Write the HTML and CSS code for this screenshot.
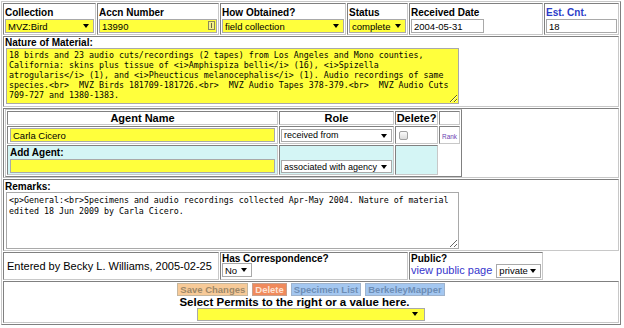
FILE: index.html
```html
<!DOCTYPE html>
<html>
<head>
    <title>Edit Accession</title>
    <link rel="stylesheet" href="styles.css">
</head>
<body>
<form id="editAccn" onsubmit="return false;">
<table class="accn">
    <tr>
        <td class="cell c1">
            <label class="lbl top" for="collection_id">Collection</label>
            <span class="dd"><select id="collection_id" class="req"><option>MVZ:Bird</option></select></span>
        </td>
        <td class="cell c2">
            <label class="lbl top" for="accn_number">Accn Number</label>
            <span class="fld"><input type="text" id="accn_number" class="txt req" value="13990"><span class="keyicon"></span></span>
        </td>
        <td class="cell c3">
            <label class="lbl top" for="accn_type">How Obtained?</label>
            <span class="dd"><select id="accn_type" class="req"><option>field collection</option></select></span>
        </td>
        <td class="cell c4">
            <label class="lbl top" for="accn_status">Status</label>
            <span class="dd"><select id="accn_status" class="req"><option>complete</option></select></span>
        </td>
        <td class="cell c5">
            <label class="lbl top" for="rec_date">Received Date</label>
            <input type="text" id="rec_date" class="txt date" value="2004-05-31">
        </td>
        <td class="cell c6">
            <label class="lbl top est" for="estimated_count">Est. Cnt.</label>
            <input type="text" id="estimated_count" class="txt" value="18">
        </td>
    </tr>
    <tr>
        <td class="cell" colspan="6">
            <label class="lbl nature" for="nature_of_material">Nature of Material:</label>
            <textarea id="nature_of_material" class="area nat req">18 birds and 23 audio cuts/recordings (2 tapes) from Los Angeles and Mono counties, California: skins plus tissue of &lt;i&gt;Amphispiza belli&lt;/i&gt; (16), &lt;i&gt;Spizella atrogularis&lt;/i&gt; (1), and &lt;i&gt;Pheucticus melanocephalis&lt;/i&gt; (1). Audio recordings of same species.&lt;br&gt;  MVZ Birds 181709-181726.&lt;br&gt;  MVZ Audio Tapes 378-379.&lt;br&gt;  MVZ Audio Cuts 709-727 and 1380-1383.</textarea>
        </td>
    </tr>
    <tr>
        <td class="cell agentcell" colspan="6">
            <table class="agents">
                <tr>
                    <th class="a1">Agent Name</th>
                    <th class="a2">Role</th>
                    <th class="a3">Delete?</th>
                    <th class="a4"></th>
                </tr>
                <tr class="agentrow">
                    <td class="acell"><input type="text" class="txt req" value="Carla Cicero"></td>
                    <td class="acell"><span class="dd"><select class="small"><option>received from</option></select></span></td>
                    <td class="acell"><input type="checkbox" class="chk"></td>
                    <td class="acell rank"><span class="ranklink">Rank</span></td>
                </tr>
                <tr class="newrow">
                    <td class="acell"><label class="lbl add">Add Agent:</label><input type="text" class="txt req"></td>
                    <td class="acell bottom"><span class="dd"><select class="small"><option>associated with agency</option></select></span></td>
                    <td class="acell"></td>
                </tr>
            </table>
        </td>
    </tr>
    <tr>
        <td class="cell" colspan="6">
            <label class="lbl remarks" for="remarks">Remarks:</label>
            <textarea id="remarks" class="area rem">&lt;p&gt;General:&lt;br&gt;Specimens and audio recordings collected Apr-May 2004. Nature of material edited 18 Jun 2009 by Carla Cicero.</textarea>
        </td>
    </tr>
    <tr>
        <td class="cell entered" colspan="2">Entered by Becky L. Williams, 2005-02-25</td>
        <td class="cell" colspan="2">
            <label class="lbl low" for="correspondence">Has Correspondence?</label>
            <span class="dd inline no"><select id="correspondence"><option>No</option></select></span>
        </td>
        <td class="cell">
            <label class="lbl low" for="is_public">Public?</label>
            <div class="pubrow">
                <a class="publink">view public page</a>
                <span class="dd inline priv"><select id="is_public"><option>private</option></select></span>
            </div>
        </td>
    </tr>
    <tr>
        <td class="cell actions" colspan="6">
            <div class="btnrow">
                <button type="submit" class="btn savBtn">Save Changes</button>
                <button type="button" class="btn delBtn">Delete</button>
                <button type="button" class="btn lnkBtn">Specimen List</button>
                <button type="button" class="btn lnkBtn">BerkeleyMapper</button>
            </div>
            <div class="permitlbl">Select Permits to the right or a value here.</div>
            <span class="dd inline permit"><select class="req"><option></option></select></span>
        </td>
    </tr>
</table>
</form>
</body>
</html>
```

FILE: styles.css
```css
body {
    margin: 1px 0 0 1px;
    font-family: "Liberation Sans", Arial, sans-serif;
    font-size: 11px;
    color: #000;
    background: #fff;
}

.accn {
    width: 620px;
    table-layout: fixed;
    border-spacing: 1px;
    border: 1px solid;
    border-color: #c8c8c8 #808080 #808080 #c8c8c8;
}

.cell {
    box-sizing: border-box;
    border: 1px solid;
    border-color: #808080 #c8c8c8 #c8c8c8 #808080;
    padding: 1px;
    vertical-align: top;
}

.c1 { width: 93px; }
.c2 { width: 122px; }
.c3 { width: 126px; }
.c4 { width: 61px; }
.c5 { width: 134px; }
.c6 { width: 75px; }

.lbl {
    display: block;
    font-weight: bold;
    font-size: 10px;
    line-height: 11px;
}

.lbl.top {
    padding-top: 2px;
    margin-bottom: 1px;
}

.lbl.nature { line-height: 10px; }
.lbl.remarks { line-height: 11px; }
.lbl.low { line-height: 9px; }
.lbl.add { line-height: 12px; }

.est {
    color: #2c3cc8;
}

.txt {
    display: block;
    width: 100%;
    box-sizing: border-box;
    height: 14px;
    margin: 0;
    border: 1px solid #a9a9a9;
    padding: 0 2px;
    font: 9.5px "Liberation Sans", Arial, sans-serif;
    background: #fff;
    color: #000;
}

.txt.date {
    width: 73px;
}

.req, .dd select.req {
    background: #ffff3c;
}

.fld {
    position: relative;
    display: block;
}

.keyicon {
    position: absolute;
    right: 2px;
    top: 2px;
    width: 5px;
    height: 7px;
    border: 1px solid #8c8a5a;
    background: #f3f08a;
}

.keyicon::after {
    content: "";
    position: absolute;
    left: 2px;
    top: 1px;
    width: 1px;
    height: 5px;
    background: #6a6840;
}

.dd {
    position: relative;
    display: block;
}

.dd.inline {
    display: inline-block;
}

.dd::after {
    content: "";
    position: absolute;
    right: 5px;
    top: 5px;
    border-left: 3px solid transparent;
    border-right: 3px solid transparent;
    border-top: 4px solid #000;
    pointer-events: none;
}

.dd select {
    appearance: none;
    -webkit-appearance: none;
    display: block;
    width: 100%;
    box-sizing: border-box;
    height: 14px;
    margin: 0;
    border: 1px solid #a9a9a9;
    border-radius: 0;
    padding: 0 2px;
    font: 9.5px "Liberation Sans", Arial, sans-serif;
    background-color: #fff;
    color: #000;
}

.dd select.small {
    height: 13px;
    font-size: 9px;
}

.dd.inline select {
    display: inline-block;
}

.area {
    display: block;
    box-sizing: border-box;
    width: 453px;
    margin: 0 0 0 1px;
    border: 1px solid #a9a9a9;
    padding: 1px 2px;
    font-family: "DejaVu Sans Mono", monospace;
    font-size: 8.3px;
    line-height: 10px;
    color: #000;
    overflow: hidden;
}

.nat {
    height: 56px;
    margin-bottom: 1px;
}

.rem {
    height: 57px;
    padding-top: 2px;
    line-height: 11px;
    background: #fff;
}

.agentcell {
    padding: 0 1px;
}

.agents {
    width: 457px;
    table-layout: fixed;
    border-spacing: 1px;
    border: 1px solid;
    border-color: #c8c8c8 #808080 #808080 #c8c8c8;
}

.agents th, .acell {
    box-sizing: border-box;
    border: 1px solid;
    border-color: #808080 #c8c8c8 #c8c8c8 #808080;
}

.agents th {
    height: 14px;
    padding: 0;
    font-size: 11px;
    line-height: 12px;
    font-weight: bold;
    text-align: center;
}

.a1 { width: 271px; }
.a2 { width: 115px; }
.a3 { width: 43px; }
.a4 { width: 21px; }

.acell {
    padding: 1px 2px;
    vertical-align: middle;
}

.agentrow .acell:nth-child(2) {
    padding: 1px;
}

.newrow .acell {
    background: #d4f5f5;
    vertical-align: top;
}

.newrow .acell.bottom {
    vertical-align: bottom;
    padding: 1px;
}

.chk {
    appearance: none;
    -webkit-appearance: none;
    display: block;
    width: 9px;
    height: 9px;
    margin: 0 0 0 1px;
    border: 1px solid #a0a0a0;
    border-radius: 2px;
    background: linear-gradient(#fafafa, #dcdcdc);
}

.rank {
    padding: 0;
    text-align: center;
}

.ranklink {
    font-size: 6.4px;
    color: #6a3fb0;
}

.entered {
    vertical-align: middle;
    padding-left: 3px;
    font-size: 11px;
}

.no select { width: 30px; }
.priv select { width: 45px; }

.pubrow {
    display: flex;
    align-items: center;
    gap: 4px;
    height: 15px;
    white-space: nowrap;
}

.publink {
    flex-shrink: 0;
    color: #3535cc;
    font-size: 11px;
    line-height: 13px;
}

.actions {
    text-align: center;
}

.btnrow {
    display: flex;
    justify-content: center;
    gap: 4px;
}

.btn {
    height: 13px;
    margin: 0;
    padding: 0 2px;
    border: 1px solid #a8a8a8;
    border-radius: 0;
    font: bold 9.5px "Liberation Sans", Arial, sans-serif;
    line-height: 11px;
    cursor: pointer;
}

.savBtn {
    background: #f7ca98;
    color: #9e8868;
    border-color: #c6b79e;
}

.delBtn {
    background: #f08a5c;
    color: #fde3d4;
    border-color: #c9a08c;
}

.lnkBtn {
    background: #a4c7f0;
    color: #6d8db5;
    border-color: #9fb3cc;
}

.permitlbl {
    font-weight: bold;
    font-size: 11.5px;
    line-height: 11px;
    margin: 1px 33px 0 0;
}

.permit select {
    width: 228px;
    height: 13px;
}

.permit::after {
    top: 4px;
    right: 7px;
}
```
